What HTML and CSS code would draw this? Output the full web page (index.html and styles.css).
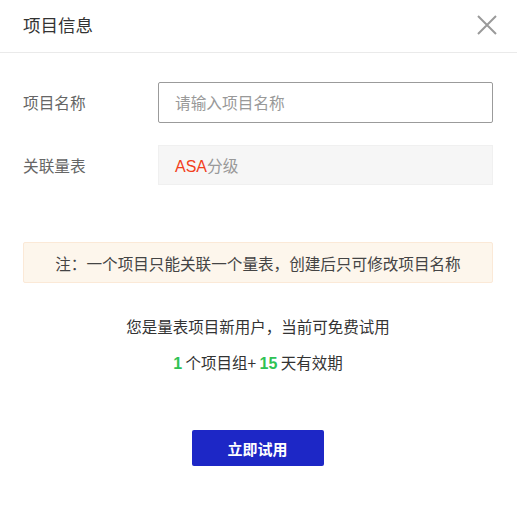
FILE: index.html
```html
<!DOCTYPE html>
<html>
<head>
<meta charset="utf-8">
<link rel="stylesheet" href="styles.css">
</head>
<body>
<div class="modal">
  <div class="header">
    <div class="title">项目信息</div>
    <svg class="close" width="20" height="20" viewBox="0 0 20 20"><path d="M1 1L19 19M19 1L1 19" stroke="#9a9a9a" stroke-width="2" fill="none"/></svg>
  </div>
  <div class="body">
    <div class="row">
      <div class="label">项目名称</div>
      <div class="input">请输入项目名称</div>
    </div>
    <div class="row row2">
      <div class="label">关联量表</div>
      <div class="field"><span><span class="red">ASA</span>分级</span></div>
    </div>
    <div class="notice">注：一个项目只能关联一个量表，创建后只可修改项目名称</div>
    <div class="info">您是量表项目新用户，当前可免费试用</div>
    <div class="info info2"><b class="green">1</b> 个项目组+ <b class="green">15</b> 天有效期</div>
    <div class="btnwrap"><div class="btn">立即试用</div></div>
  </div>
</div>
</body>
</html>
```
FILE: styles.css
```css
* { box-sizing: border-box; }
html, body { margin: 0; padding: 0; background: #fff; }
body { font-family: "Noto Sans CJK SC", "Liberation Sans", sans-serif; color: #333; width: 517px; height: 509px; overflow: hidden; }
.header { height: 53px; border-bottom: 1px solid #eaeaea; display: flex; align-items: center; justify-content: space-between; padding: 0 20px 2px 23px; }
.title { font-size: 17.5px; color: #333; line-height: 24px; }
.close { display: block; margin-top: -1px; }
.body { padding: 29px 24px 0 23px; }
.row { display: flex; align-items: center; height: 41px; }
.row2 { margin-top: 22px; height: 40px; }
.label { width: 135px; font-size: 15.7px; color: #666; }
.input { flex: 1; height: 41px; border: 1px solid #9b9b9b; border-radius: 2px; padding-left: 16px; display: flex; align-items: center; font-size: 15.7px; color: #999; }
.field { flex: 1; height: 40px; background: #f6f6f6; border: 1px solid #f0f0f0; padding-left: 16px; display: flex; align-items: center; font-size: 15.7px; color: #999; }
.red { color: #f2401c; font-family: "Liberation Sans", "Noto Sans CJK SC", sans-serif; font-size: 16px; }
.notice { margin-top: 57px; height: 41px; background: #fdf6ec; border: 1px solid #fbe9d7; border-radius: 2px; display: flex; align-items: center; justify-content: center; font-size: 15.6px; color: #444; }
.info { margin-top: 32px; text-align: center; font-size: 15.5px; color: #333; line-height: 22px; }
.info2 { margin-top: 14px; }
.green { color: #2fc254; font-family: "Liberation Sans", sans-serif; font-size: 16px; }
.btnwrap { display: flex; justify-content: center; margin-top: 55px; padding-right: 1px; }
.btn { width: 132px; height: 36px; background: #1d27c6; border-radius: 2px; color: #fff; font-size: 15px; font-weight: bold; display: flex; align-items: center; justify-content: center; }
```
